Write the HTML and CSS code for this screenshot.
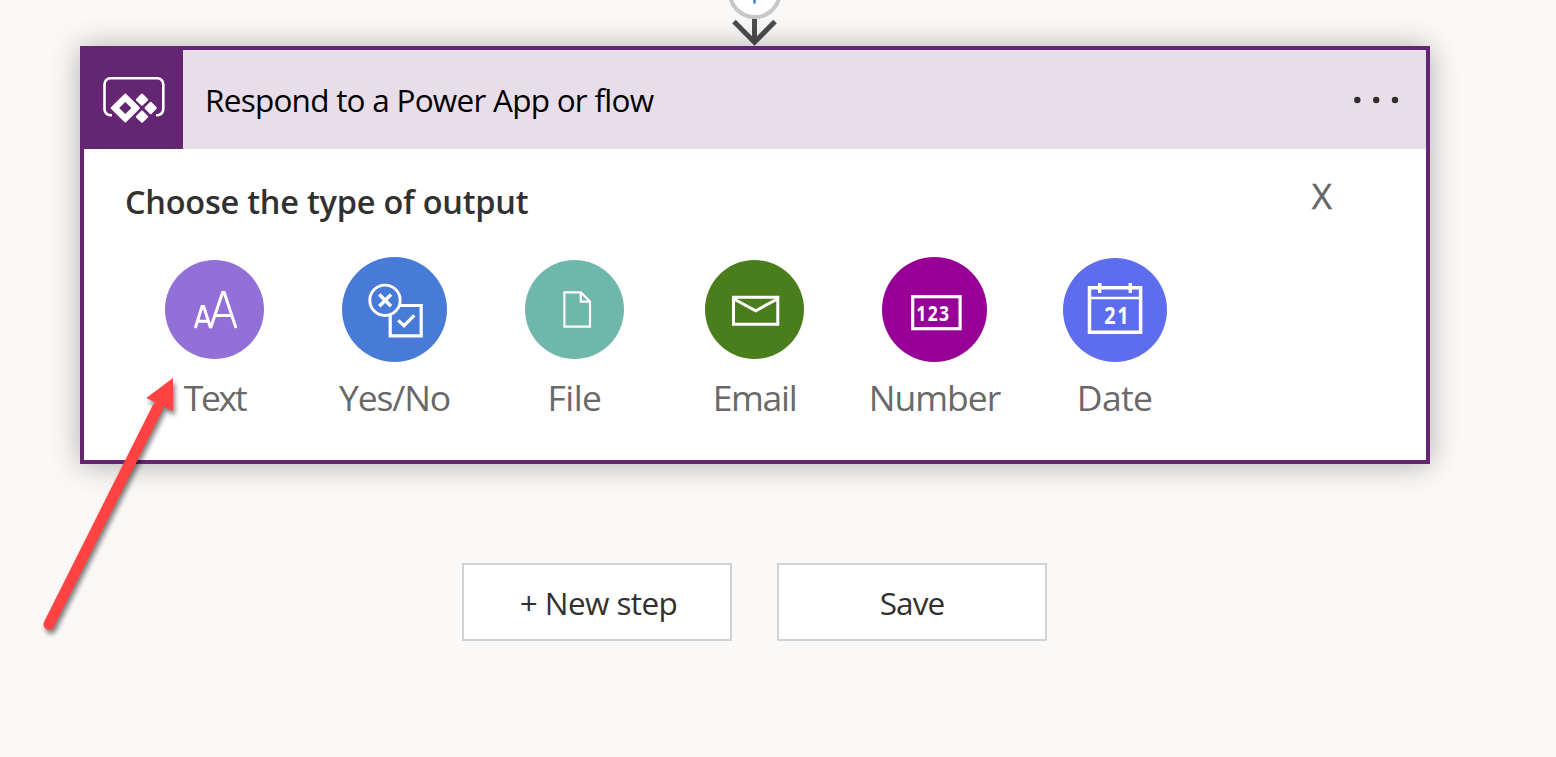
FILE: index.html
```html
<!DOCTYPE html>
<html lang="en">
<head>
<meta charset="utf-8">
<title>Flow designer</title>
<link rel="stylesheet" href="styles.css">
</head>
<body>
<main class="canvas">
  <svg class="connector" width="60" height="46" viewBox="0 0 60 46">
    <path d="M29.5 17V43M9 21.5L29.5 42.2L50 21.5" fill="none" stroke="#4d4d4d" stroke-width="5"/>
    <circle cx="29.8" cy="-7.9" r="25" fill="#fff" stroke="#c8c8c8" stroke-width="4"/>
    <path d="M29.5 -12V3.6" stroke="#3b79d6" stroke-width="2.4"/>
  </svg>

  <section class="card">
    <header class="card-header">
      <svg class="app-icon" width="99" height="99" viewBox="0 0 99 99">
        <path d="M28 65.3H26.5a6 6 0 0 1-6-6V34.200a6 6 0 0 1 6-6H73.300a6 6 0 0 1 6 6V59.300a6 6 0 0 1-6 6H72" fill="none" stroke="#fff" stroke-width="2.600"/>
        <g fill="#fff" stroke="#fff" stroke-width="2" stroke-linejoin="round">
          <path d="M41.300 44.400L54.900 58L41.300 71.600L27.700 58Z"/>
          <path d="M58 44.500L63.200 49.700L58 54.900L52.800 49.700ZM66.700 52.800L71.900 58L66.700 63.200L61.500 58ZM58 61.500L63.200 66.700L58 71.900L52.800 66.700Z"/>
        </g>
        <path d="M41.300 51.900L47.400 58L41.300 64.100L35.200 58Z" fill="#642672"/>
      </svg>
      <h1 class="card-title">Respond to a Power App or flow</h1>
      <svg class="more" width="46" height="8" viewBox="0 0 46 8" fill="#2f2e2d">
        <circle cx="4.300" cy="4" r="3.200"/><circle cx="23.200" cy="4" r="3.200"/><circle cx="42" cy="4" r="3.200"/>
      </svg>
    </header>
    <div class="card-body">
      <div class="prompt">
        <h2 class="prompt-title">Choose the type of output</h2>
        <span class="close">X</span>
      </div>
      <div class="types">
        <div class="type">
          <svg class="type-icon" viewBox="0 0 106 106">
            <circle cx="53.500" cy="52.500" r="49.500" fill="#936fd8"/>
            <path d="M34.300 71L41 49.600H42.700L49.600 71M49.600 71L61.600 35.500H63.200L75 71M36.800 64.300H47.500M53.500 58.600H71" fill="none" stroke="#fff" stroke-width="3"/>
          </svg>
          <span class="type-label t-text">Text</span>
        </div>
        <div class="type">
          <svg class="type-icon" viewBox="0 0 106 106">
            <circle cx="53.500" cy="52.500" r="52.500" fill="#487ad8"/>
            <g fill="none" stroke="#fff" stroke-width="3.200">
              <circle cx="44" cy="43.300" r="15.200" stroke-width="2.900"/>
              <path d="M38.300 37.400L50 49.200M50 37.400L38.300 49.200" stroke-width="3.500"/>
              <path d="M58.500 48.500H80.200V78.800H49.200V57.500"/>
              <path d="M57.300 63.400L63 68.700L73.300 58.300"/>
            </g>
          </svg>
          <span class="type-label t-yesno">Yes/No</span>
        </div>
        <div class="type">
          <svg class="type-icon" viewBox="0 0 106 106">
            <circle cx="53.500" cy="52.500" r="49.500" fill="#6fb7ab"/>
            <path d="M43.400 35.400H60L69 44.500V69.600H43.400ZM59.800 35.400V44.600H69" fill="none" stroke="#fff" stroke-width="2.200"/>
          </svg>
          <span class="type-label t-file">File</span>
        </div>
        <div class="type">
          <svg class="type-icon" viewBox="0 0 106 106">
            <circle cx="53.500" cy="52.500" r="49.500" fill="#4a7d1c"/>
            <path d="M32.500 40.200H76.800V67.200H32.500ZM32.500 41.800L54.700 53.700L76.800 41.800" fill="none" stroke="#fff" stroke-width="3"/>
          </svg>
          <span class="type-label t-email">Email</span>
        </div>
        <div class="type">
          <svg class="type-icon" viewBox="0 0 106 106">
            <circle cx="53.500" cy="52.500" r="52.500" fill="#960096"/>
            <rect x="31.700" y="39.700" width="47.400" height="32" fill="none" stroke="#fff" stroke-width="3.200"/>
            <text class="glyph-text" transform="translate(35.300 63.500) scale(.82 1)" font-size="21.500" letter-spacing="1.600">123</text>
          </svg>
          <span class="type-label t-number">Number</span>
        </div>
        <div class="type">
          <svg class="type-icon" viewBox="0 0 106 106">
            <circle cx="54" cy="53" r="52" fill="#5d6dee"/>
            <path d="M28.500 30.700H79.600V75.300H28.500Z" fill="none" stroke="#fff" stroke-width="3.500"/>
            <path d="M28.500 41H79.600" stroke="#fff" stroke-width="2.700"/>
            <path d="M38.700 26V36M69.300 26V36" stroke="#fff" stroke-width="3.400"/>
            <text class="glyph-text" transform="translate(43.300 66.700) scale(.86 1)" font-size="23" letter-spacing="2">21</text>
          </svg>
          <span class="type-label t-date">Date</span>
        </div>
      </div>
    </div>
  </section>

  <div class="actions">
    <button class="btn b-new">+ New step</button>
    <button class="btn b-save">Save</button>
  </div>

  <svg class="pointer" width="170" height="290" viewBox="0 0 170 290">
    <g fill="#ff4343">
      <path d="M19 264.300L127.500 48" stroke="#ff4343" stroke-width="11" stroke-linecap="round"/>
      <path d="M143 18V51.300L116.300 38Z"/>
    </g>
  </svg>
</main>
</body>
</html>
```
FILE: styles.css
```css
* { box-sizing: border-box; }

body {
  margin: 0;
  background: #faf9f8;
  color: #323130;
  font-family: "Open Sans", "Noto Sans", sans-serif;
}

.canvas {
  position: relative;
  width: 1556px;
  height: 757px;
  overflow: hidden;
}

.connector {
  display: block;
  margin-left: 725px;
}

.card {
  position: relative;
  width: 1350px;
  height: 418px;
  margin-left: 80px;
  border: 4px solid #642672;
  background: #fff;
  box-shadow: 0 1px 28px rgba(0, 0, 0, .3);
}

.card-header {
  display: flex;
  align-items: center;
  height: 99px;
  padding-right: 27px;
  background: #e8deea;
}

.app-icon {
  flex: none;
  background: #642672;
}

.card-title {
  flex: 1;
  margin: 0;
  padding-left: 22px;
  font-size: 31.500px;
  font-weight: 400;
  line-height: 44px;
  letter-spacing: -.75px;
  white-space: nowrap;
  color: #000;
}

.card-body { padding: 0 40px; }

.prompt {
  display: flex;
  justify-content: space-between;
  height: 108px;
  padding: 31px 54px 0 1px;
}

.prompt-title {
  margin: 0;
  font-size: 32.500px;
  font-weight: 600;
  line-height: 44px;
  letter-spacing: -.24px;
  white-space: nowrap;
}

.close {
  margin-top: -6px;
  font-size: 35px;
  line-height: 44px;
  color: #666;
  -webkit-text-stroke: .4px #666;
}

.types {
  display: grid;
  grid-template-columns: repeat(6, 180px);
}

.type {
  display: flex;
  flex-direction: column;
  align-items: center;
}

.type-icon {
  width: 106px;
  height: 106px;
}

.type-label {
  margin-top: 9px;
  padding-left: 1px;
  font-size: 35.500px;
  line-height: 50px;
  white-space: nowrap;
  color: #696969;
}

.t-text { letter-spacing: -2.300px; }
.t-yesno { letter-spacing: -1.100px; }
.t-file { letter-spacing: -.6px; }
.t-email { letter-spacing: -1.300px; }
.t-number { letter-spacing: -1px; }
.t-date { letter-spacing: -.7px; }

.glyph-text {
  fill: #fff;
  font-family: "Open Sans", "Noto Sans", sans-serif;
  font-weight: 700;
}

.actions {
  display: flex;
  gap: 45px;
  margin: 99px 0 0 462px;
}

.btn {
  width: 270px;
  height: 78px;
  padding: 0;
  border: 2px solid #d1d1d1;
  background: #fff;
  color: #323130;
  font-family: inherit;
  font-size: 31.500px;
}

.b-new {
  padding-left: 3px;
  letter-spacing: -.6px;
}

.b-save { letter-spacing: -.9px; }

.pointer {
  position: absolute;
  left: 30px;
  top: 360px;
  filter: drop-shadow(2px 4px 2.500px rgba(0, 0, 0, .5));
}
```
